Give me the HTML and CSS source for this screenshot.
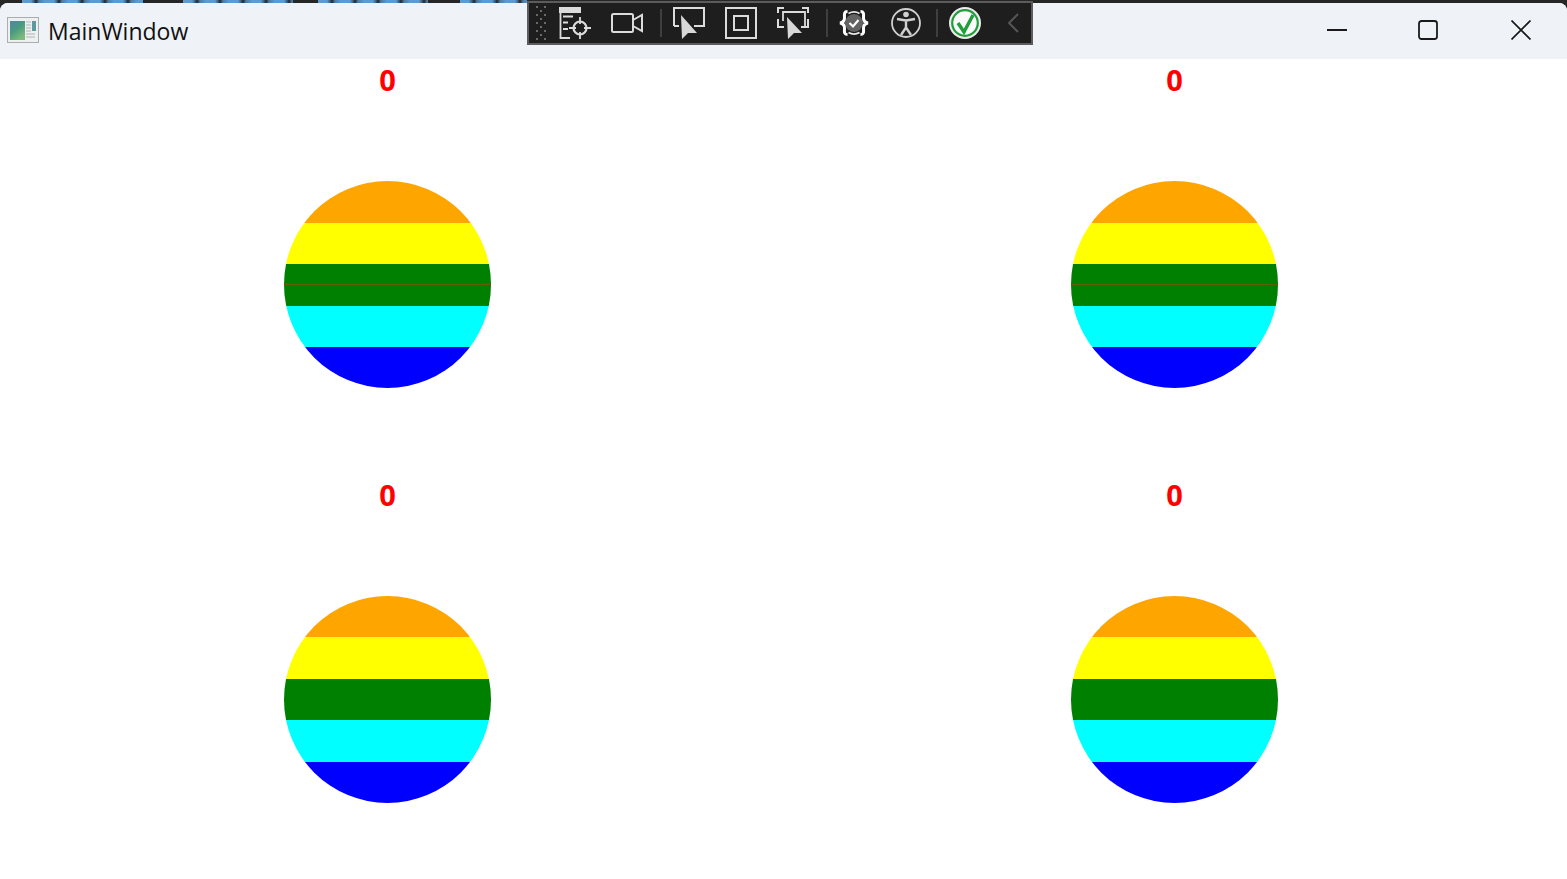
FILE: index.html
```html
<!DOCTYPE html>
<html lang="en">

<head>
    <meta charset="UTF-8">
    <meta name="viewport" content="width=device-width, initial-scale=1.0">
    <title>MainWindow</title>
    <link rel="stylesheet" href="styles.css">
</head>

<body>

    <!-- what shows behind the window -->
    <div class="backdrop">
        <span class="smear smear-a"></span>
        <span class="smear smear-b"></span>
        <span class="smear smear-c"></span>
        <span class="smear smear-d"></span>
    </div>

    <div class="window">
        <!-- Title bar -->
        <header class="titlebar">
            <svg class="app-icon" width="32" height="26" viewBox="0 0 32 26">
                <defs>
                    <linearGradient id="pane" x1="0" y1="0" x2="0.6" y2="1">
                        <stop offset="0" stop-color="#4f86a8" />
                        <stop offset="0.5" stop-color="#4a9a80" />
                        <stop offset="1" stop-color="#7dbb7a" />
                    </linearGradient>
                </defs>
                <rect x="0.5" y="0.5" width="31" height="25" fill="#eef0f0" stroke="#a9aeb0" />
                <rect x="3" y="4" width="15" height="19" fill="url(#pane)" />
                <rect x="25" y="4" width="4" height="10" fill="#5d9aa0" />
                <path d="M19 5h5M19 8h5M19 11h5M19 14h5M19 17h9M19 20h9" stroke="#c4c8ca" stroke-width="1.4" />
            </svg>
            <span class="title">MainWindow</span>
            <div class="controls">
                <svg width="20" height="20" viewBox="0 0 20 20">
                    <path d="M0 10h20" stroke="#1a1a1a" stroke-width="1.8" fill="none" />
                </svg>
                <svg width="20" height="20" viewBox="0 0 20 20">
                    <rect x="1" y="1" width="18" height="18" rx="2.5" stroke="#1a1a1a" stroke-width="1.8" fill="none" />
                </svg>
                <svg class="close" width="20" height="20" viewBox="0 0 20 20">
                    <path d="M0.500 0.500l19 19M19.500 0.500l-19 19" stroke="#1a1a1a" stroke-width="1.700" fill="none" />
                </svg>
            </div>
        </header>

        <!-- Four gauges -->
        <main class="grid">
            <section class="cell">
                <div class="count">0</div>
                <div class="disc">
                    <div class="band orange"></div>
                    <div class="band yellow"></div>
                    <div class="band green"><span class="needle"></span></div>
                    <div class="band cyan"></div>
                    <div class="band blue"></div>
                </div>
            </section>
            <section class="cell">
                <div class="count">0</div>
                <div class="disc">
                    <div class="band orange"></div>
                    <div class="band yellow"></div>
                    <div class="band green"><span class="needle"></span></div>
                    <div class="band cyan"></div>
                    <div class="band blue"></div>
                </div>
            </section>
            <section class="cell">
                <div class="count">0</div>
                <div class="disc">
                    <div class="band orange"></div>
                    <div class="band yellow"></div>
                    <div class="band green"></div>
                    <div class="band cyan"></div>
                    <div class="band blue"></div>
                </div>
            </section>
            <section class="cell">
                <div class="count">0</div>
                <div class="disc">
                    <div class="band orange"></div>
                    <div class="band yellow"></div>
                    <div class="band green"></div>
                    <div class="band cyan"></div>
                    <div class="band blue"></div>
                </div>
            </section>
        </main>
    </div>

    <!-- Debug toolbar floating over the title bar -->
    <div class="toolbar">
        <svg class="grip" width="12" height="36" viewBox="0 0 12 36">
            <path d="M1 2h2M9 2h2M5 6h2M1 10h2M9 10h2M5 14h2M1 18h2M9 18h2M5 22h2M1 26h2M9 26h2M5 30h2M1 34h2M9 34h2" stroke="#6a6a6a" stroke-width="2" />
        </svg>
        <!-- live visual tree -->
        <svg class="tool" width="32" height="32" viewBox="0 0 32 32">
            <path d="M0 0h22v6H0z" fill="#dcdcdc" />
            <path d="M1.500 6v25H11M4 9.500h10M4 15.500h5M4 22h5" stroke="#dcdcdc" stroke-width="1.800" fill="none" />
            <circle cx="21" cy="21" r="6.500" stroke="#dcdcdc" stroke-width="2.200" fill="none" />
            <path d="M21 10v7M21 25v7M10 21h7M25 21h7" stroke="#dcdcdc" stroke-width="1.800" fill="none" />
        </svg>
        <!-- camera -->
        <svg class="tool" width="32" height="32" viewBox="0 0 32 32">
            <rect x="1" y="7" width="21" height="18" rx="1.500" stroke="#dcdcdc" stroke-width="2" fill="none" />
            <path d="M22 13l9-5v16l-9-5" stroke="#dcdcdc" stroke-width="2" fill="none" />
        </svg>
        <span class="sep"></span>
        <!-- select element -->
        <svg class="tool" width="32" height="32" viewBox="0 0 32 32">
            <path d="M1 19V1h30v18H21M1 19h5" stroke="#dcdcdc" stroke-width="2" fill="none" />
            <path d="M8 8l1 24 6-6h9z" fill="#d8d8d8" />
        </svg>
        <!-- adorners -->
        <svg class="tool" width="32" height="32" viewBox="0 0 32 32">
            <rect x="1" y="1" width="30" height="30" stroke="#dcdcdc" stroke-width="2" fill="none" />
            <rect x="9" y="9" width="14" height="14" stroke="#dcdcdc" stroke-width="2" fill="none" />
        </svg>
        <!-- preview selection -->
        <svg class="tool tool-last" width="32" height="32" viewBox="0 0 32 32">
            <path d="M1 6V1h6M25 1h6v5M1 12v8h6M31 12v8h-6" stroke="#dcdcdc" stroke-width="2" fill="none" />
            <path d="M6 14V5h22v15h-4" stroke="#dcdcdc" stroke-width="1.800" fill="none" />
            <path d="M10 10l1 22 6-6h8z" fill="#d8d8d8" />
        </svg>
        <span class="sep"></span>
        <!-- binding failures -->
        <svg class="tool tool-wide" width="30" height="30" viewBox="0 0 30 30">
            <circle cx="15" cy="15" r="9" fill="#636363" />
            <path d="M9.500 5.500a11 11 0 0 1 11 0M9.500 24.500a11 11 0 0 0 11 0" stroke="#e8e8e8" stroke-width="1.800" fill="none" />
            <path d="M10.500 15l3.500 3.500 5.500-6.500" stroke="#fff" stroke-width="2.200" fill="none" />
            <path d="M8.500 3.500C4.500 3.500 5.500 7 5.500 10 5.500 12.500 4 14.500 1 15 4 15.500 5.500 17.500 5.500 20 5.500 23 4.500 26.500 8.500 26.500M21.500 3.500C25.500 3.500 24.500 7 24.500 10 24.500 12.500 26 14.500 29 15 26 15.500 24.500 17.500 24.500 20 24.500 23 25.500 26.500 21.500 26.500" stroke="#fff" stroke-width="3" fill="none" />
        </svg>
        <!-- accessibility -->
        <svg class="tool tool-short" width="30" height="30" viewBox="0 0 30 30">
            <circle cx="15" cy="15" r="14" stroke="#d0d0d0" stroke-width="1.800" fill="none" />
            <circle cx="15" cy="6.500" r="2.800" fill="#d0d0d0" />
            <path d="M6 11l9 1.500 9-1.500M15 12v8M15 19.500l-5 7.500M15 19.500l5 7.500" stroke="#d0d0d0" stroke-width="2.400" fill="none" />
        </svg>
        <span class="sep"></span>
        <!-- no issues -->
        <svg class="tool tool-status" width="32" height="32" viewBox="0 0 32 32">
            <circle cx="16" cy="16" r="16" fill="#ececec" />
            <circle cx="16" cy="16" r="12.800" fill="#fafafa" stroke="#1f9e3a" stroke-width="2.200" />
            <path d="M9 16l6 9 9-17" stroke="#1f9e3a" stroke-width="3.400" fill="none" />
        </svg>
        <svg width="12" height="20" viewBox="0 0 12 20">
            <path d="M11 1L2 10l9 9" stroke="#555" stroke-width="2" fill="none" />
        </svg>
    </div>

</body>

</html>
```

FILE: styles.css
```css
* {
    box-sizing: border-box;
}

html,
body {
    margin: 0;
    height: 100%;
    overflow: hidden;
}

body {
    font-family: "Open Sans", sans-serif;
    background-color: #262626;
    position: relative;
}

/* bit of another window peeking out above ours */
.backdrop {
    display: flex;
    height: 3px;
    padding-left: 22px;
}

.smear {
    display: block;
    background: repeating-linear-gradient(90deg, #5b9bd3 0, #5b9bd3 9px, #3b5f80 12px, #262626 14px, #4a7ca8 17px, #5b9bd3 23px);
}

.smear-a {
    width: 121px;
}

.smear-b {
    width: 110px;
    margin-left: 40px;
}

.smear-c {
    width: 110px;
    margin-left: 25px;
}

.smear-d {
    width: 67px;
    margin-left: 32px;
}

.window {
    background-color: white;
    height: 876px;
    border-radius: 8px 8px 0 0;
    overflow: hidden;
}

.titlebar {
    display: flex;
    align-items: center;
    height: 56px;
    padding-left: 7px;
    padding-bottom: 2px;
    background-color: #eff3f8;
}

.app-icon {
    margin-right: 9px;
}

.title {
    font-size: 23px;
    color: #111;
    margin-top: 2px;
}

.controls {
    display: flex;
    margin-left: auto;
    margin-right: 36px;
    gap: 71px;
}

.close {
    margin-left: 2px;
}

.grid {
    display: grid;
    grid-template-columns: repeat(2, 787px);
    grid-auto-rows: 414.6px;
    margin-left: -6px;
}

.cell {
    display: flex;
    flex-direction: column;
    align-items: center;
}

.count {
    color: #ff0000;
    font-size: 29px;
    font-weight: 700;
    line-height: 42px;
    margin-bottom: 80.4px;
}

.disc {
    width: 207px;
    height: 207px;
    border-radius: 50%;
    overflow: hidden;
}

.band {
    height: 20%;
}

.orange {
    background-color: #ffa500;
}

.yellow {
    background-color: #ffff00;
}

.green {
    background-color: #008000;
    display: flex;
    align-items: center;
}

.cyan {
    background-color: #00ffff;
}

.blue {
    background-color: #0000ff;
}

.needle {
    display: block;
    width: 100%;
    height: 1px;
    background-color: #5f6000;
}

.toolbar {
    position: absolute;
    left: 527px;
    top: 1px;
    width: 506px;
    height: 44px;
    display: flex;
    align-items: center;
    padding-left: 6px;
    background-color: #1e1e1e;
    border: 2px solid #5c5c5c;
}

.grip {
    margin-right: 12px;
}

.tool {
    margin-right: 20px;
}

.tool-last {
    margin-right: 17px;
}

.tool-wide {
    margin-right: 22px;
}

.tool-short {
    margin-right: 15px;
}

.tool-status {
    margin-right: 26px;
}

.sep {
    width: 2px;
    height: 28px;
    margin-right: 11px;
    background-color: #3f3f3f;
}

/* the first separator follows the camera */
.tool + .sep {
    margin-left: -3px;
}

.tool-last + .sep,
.tool-short + .sep {
    margin-left: 0;
}
```
